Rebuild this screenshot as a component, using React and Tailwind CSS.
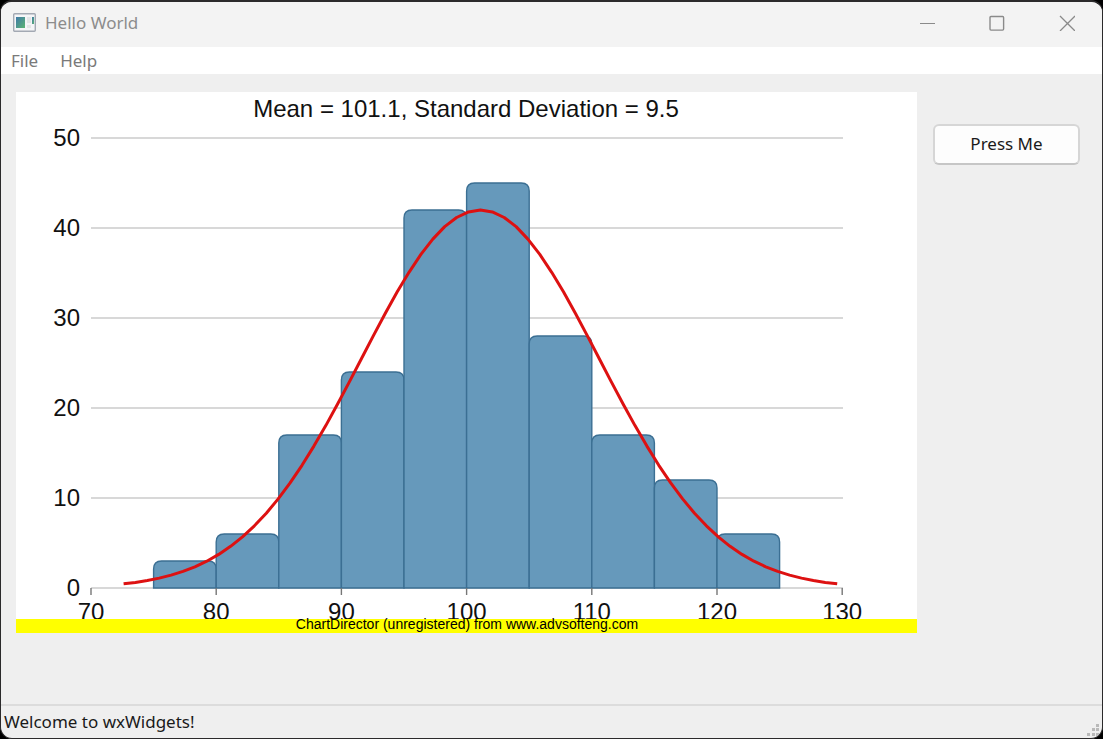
import { useState } from 'react';

const MEAN = 101.1;
const STD_DEV = 9.5;
const PEAK = 42;

const bars = [
  { from: 75, count: 3 },
  { from: 80, count: 6 },
  { from: 85, count: 17 },
  { from: 90, count: 24 },
  { from: 95, count: 42 },
  { from: 100, count: 45 },
  { from: 105, count: 28 },
  { from: 110, count: 17 },
  { from: 115, count: 12 },
  { from: 120, count: 6 },
];

const yTicks = [0, 10, 20, 30, 40, 50];
const xTicks = [70, 80, 90, 100, 110, 120, 130];

// Data value -> chart coordinates
const xPos = (v) => 75 + (v - 70) * 12.52;
const yPos = (v) => 496 - v * 9;

// Normal curve over mean +/- 3 standard deviations
const curve = Array.from({ length: 61 }, (_, i) => {
  const z = -3 + i / 10;
  const x = xPos(MEAN + z * STD_DEV);
  const y = yPos(PEAK * Math.exp((-z * z) / 2));
  return `${x.toFixed(1)},${y.toFixed(1)}`;
}).join(' ');

// Bar outline with rounded top corners
const barPath = ({ from, count }) => {
  const l = xPos(from);
  const r = xPos(from + 5);
  const t = yPos(count);
  return `M${l} 496V${t + 8}Q${l} ${t} ${l + 8} ${t}H${r - 8}Q${r} ${t} ${r} ${t + 8}V496Z`;
};

const HistogramChart = () => (
  <svg
    viewBox="0 0 901 541"
    role="img"
    aria-label="Histogram with normal curve"
    className="block w-full bg-white font-['Liberation_Sans',Arial,sans-serif]"
  >
    <text x="450" y="25" textAnchor="middle" className="fill-[#111111] text-[24px]">
      Mean = {MEAN}, Standard Deviation = {STD_DEV}
    </text>

    {yTicks.map((v) => (
      <g key={v}>
        <line x1="75" x2="827" y1={yPos(v)} y2={yPos(v)} stroke="#d8d8d8" strokeWidth="2" />
        <text x="64" y={yPos(v) + 8} textAnchor="end" className="fill-[#111111] text-[24px]">
          {v}
        </text>
      </g>
    ))}

    {bars.map((bar) => (
      <path key={bar.from} d={barPath(bar)} fill="#6699bb" stroke="#3b6f93" strokeWidth="1.4" />
    ))}

    {xTicks.map((v) => (
      <g key={v}>
        <line x1={xPos(v)} x2={xPos(v)} y1="496" y2="503" stroke="#777777" strokeWidth="1.4" />
        <text x={xPos(v)} y="528" textAnchor="middle" className="fill-[#111111] text-[24px]">
          {v}
        </text>
      </g>
    ))}

    <polyline points={curve} fill="none" stroke="#dd1111" strokeWidth="3" strokeLinejoin="round" />

    <rect x="0" y="527" width="901" height="14" fill="#ffff00" />
    <text x="451" y="537" textAnchor="middle" className="fill-black text-[14px]">
      ChartDirector (unregistered) from www.advsofteng.com
    </text>
  </svg>
);

const AppIcon = () => (
  <svg width="24" height="20" viewBox="0 0 24 20" aria-hidden="true">
    <defs>
      <linearGradient id="screen" x1="0" y1="0" x2="1" y2="1">
        <stop offset="0" stopColor="#3f79a8" />
        <stop offset="1" stopColor="#5cb573" />
      </linearGradient>
    </defs>
    <rect x="1.7" y="0.7" width="21.6" height="17.6" rx="1" fill="#f4f5f7" stroke="#a3a9b3" strokeWidth="1.4" />
    <rect x="4" y="4" width="9" height="11" fill="url(#screen)" />
    <rect x="15" y="4" width="4" height="6" fill="#e3e5e7" />
    <rect x="15" y="12" width="4" height="3" fill="#e3e5e7" />
    <rect x="20" y="4" width="2" height="7" fill="url(#screen)" />
  </svg>
);

const TitleBar = () => (
  <header className="flex h-[45px] items-center bg-[#f3f3f3] pb-[3px] pl-[11px]">
    <AppIcon />
    <h1 className="ml-[9px] flex-1 text-[17px] text-[#8c8c8c]">Hello World</h1>
    <div className="flex h-full text-[#8a8a8a]">
      <button type="button" aria-label="Minimize" className="flex w-[70px] items-center justify-center">
        <svg width="16" height="16" viewBox="0 0 16 16" fill="none" stroke="currentColor">
          <path d="M1 8.5H16" />
        </svg>
      </button>
      <button type="button" aria-label="Maximize" className="flex w-[70px] items-center justify-center">
        <svg width="16" height="16" viewBox="0 0 16 16" fill="none" stroke="currentColor" strokeWidth="1.4">
          <rect x="1" y="1.5" width="13.6" height="13.6" rx="1" />
        </svg>
      </button>
      <button type="button" aria-label="Close" className="flex w-[70px] items-center justify-center">
        <svg width="16" height="16" viewBox="0 0 16 16" fill="none" stroke="currentColor" strokeWidth="1.3">
          <path d="M1 1L16 16M16 1L1 16" />
        </svg>
      </button>
    </div>
  </header>
);

const MenuBar = () => (
  <nav className="flex h-[27px] items-center gap-[22px] bg-white px-[10px] text-[17px] text-[#7a7a7a]">
    <button type="button">File</button>
    <button type="button">Help</button>
  </nav>
);

const ResizeGrip = () => (
  <svg width="13" height="12" viewBox="0 0 13 12" fill="#b9b9b9" aria-hidden="true">
    <path d="M9 0h3v3h-3zM5 4h3v3h-3zM9 4h3v3h-3zM0 9h3v3h-3zM5 9h3v3h-3zM9 9h3v3h-3z" />
  </svg>
);

export default function App() {
  const [status, setStatus] = useState('Welcome to wxWidgets!');

  return (
    <div className="min-h-screen bg-black font-['Noto_Sans','Open_Sans',sans-serif]">
      <div className="flex min-h-screen flex-col overflow-hidden rounded-xl border border-t-2 border-[#2b2a2b] bg-[#efefef]">
        <TitleBar />
        <MenuBar />

        <main className="flex flex-1 items-start gap-4 pt-[18px] pr-[22px] pl-[15px]">
          <div className="min-w-0 flex-1">
            <HistogramChart />
          </div>
          <button
            type="button"
            onClick={() => setStatus('Button pressed')}
            className="mt-8 h-[41px] w-[147px] rounded-md border-2 border-[#d6d6d6] border-b-[#c6c6c6] bg-[#fdfdfd] pb-px text-[17px] text-[#1a1a1a]"
          >
            Press Me
          </button>
        </main>

        <footer className="flex h-[34px] items-center justify-between border-t-2 border-[#dcdcdc] pl-[3px] text-[17px] text-[#1a1a1a]">
          <span>{status}</span>
          <span className="self-end p-[2px]">
            <ResizeGrip />
          </span>
        </footer>
      </div>
    </div>
  );
}
